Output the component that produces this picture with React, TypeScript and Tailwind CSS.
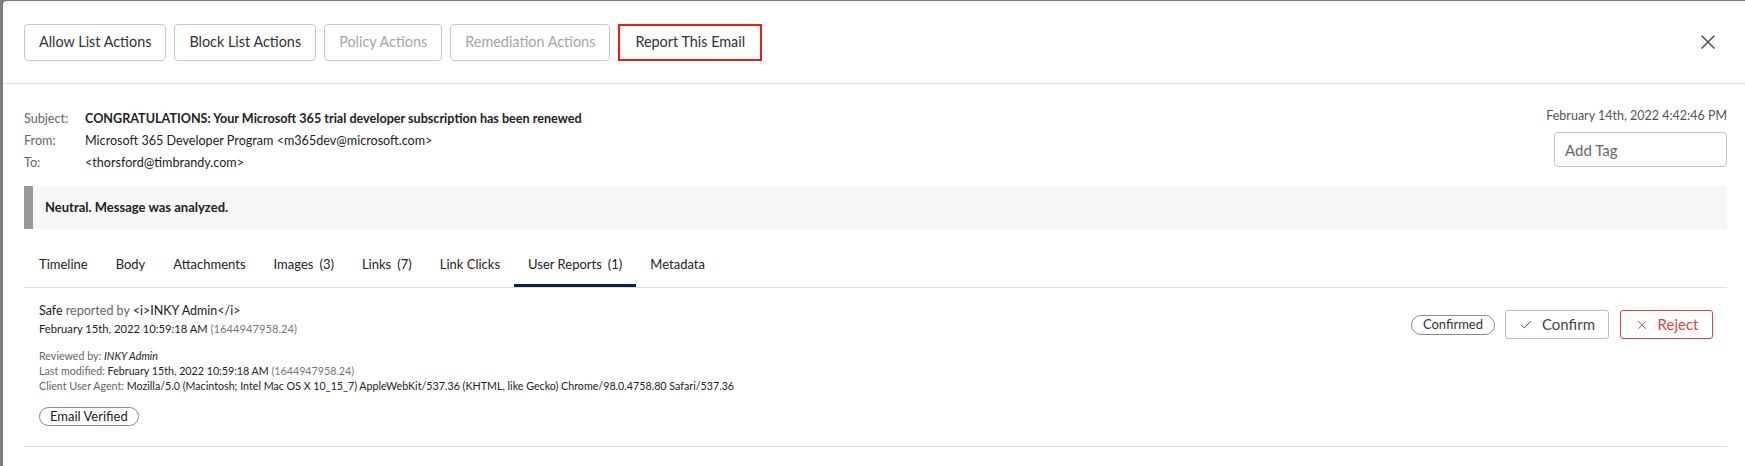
import { X, Check } from "lucide-react";

const ACTIONS = [
  { label: "Allow List Actions", disabled: false },
  { label: "Block List Actions", disabled: false },
  { label: "Policy Actions", disabled: true },
  { label: "Remediation Actions", disabled: true },
];

const TABS = [
  { label: "Timeline" },
  { label: "Body" },
  { label: "Attachments" },
  { label: "Images", count: 3 },
  { label: "Links", count: 7 },
  { label: "Link Clicks" },
  { label: "User Reports", count: 1, active: true },
  { label: "Metadata" },
];

export default function App() {
  return (
    <div className="h-[466px] w-full overflow-hidden bg-[#7c7c7c] pl-[3px] pt-[1px] font-['Lato',sans-serif] text-[#222]">
      <div className="h-full rounded-tl-[4px] bg-white">
        {/* action bar */}
        <div className="flex h-[83px] items-center border-b border-[#dddddd] pl-[21px] pr-[25px]">
          <div className="flex items-center gap-2">
            {ACTIONS.map((a) => (
              <button
                key={a.label}
                className={`h-[37px] rounded-[4px] border border-[#c6c6c6] px-[14px] text-[14.4px] ${
                  a.disabled ? "text-[#a5a5a5]" : "text-[#333]"
                }`}
              >
                {a.label}
              </button>
            ))}
            <button className="h-[37px] border-2 border-[#ee1c0e] px-[15px] text-[14.4px] text-[#333]">
              Report This Email
            </button>
          </div>
          <button className="ml-auto text-[#555]">
            <X size={24} strokeWidth={1.6} />
          </button>
        </div>

        <div className="pl-[21px] pr-[18px]">
          {/* message header */}
          <div className="flex justify-between pt-[24px]">
            <div className="grid grid-cols-[61px_1fr] text-[12.6px] leading-[22px]">
              <span className="text-[#666]">Subject:</span>
              <span className="font-bold">CONGRATULATIONS: Your Microsoft 365 trial developer subscription has been renewed</span>
              <span className="text-[#666]">From:</span>
              <span>Microsoft 365 Developer Program &lt;m365dev@microsoft.com&gt;</span>
              <span className="text-[#666]">To:</span>
              <span>&lt;thorsford@timbrandy.com&gt;</span>
            </div>
            <div className="-mt-[2px] flex flex-col items-end">
              <div className="text-[12.5px] leading-[20px] text-[#555]">February 14th, 2022 4:42:46 PM</div>
              <input
                placeholder="Add Tag"
                className="mt-[6px] h-[35px] w-[173px] rounded-[4px] border border-[#c4c4c4] px-[10px] text-[15px] placeholder:text-[#666]"
              />
            </div>
          </div>

          {/* verdict */}
          <div className="mt-[12px] flex h-[43px] items-center border-l-[9px] border-[#999] bg-[#f7f7f7] pl-[12px] text-[13px] font-bold">
            Neutral. Message was analyzed.
          </div>

          {/* tabs */}
          <div className="mt-[17px] flex border-b border-[#dddddd] pl-px">
            {TABS.map((t) => (
              <div
                key={t.label}
                className={`border-b-[3px] px-[14px] pb-[10px] pt-[8px] text-[13px] leading-[20px] ${
                  t.active ? "border-[#0f1d4f]" : "border-transparent"
                }`}
              >
                {t.label}
                {t.count !== undefined && <span className="ml-[6px]">({t.count})</span>}
              </div>
            ))}
          </div>

          {/* user report */}
          <div className="flex justify-between border-b border-[#dddddd] pb-[19px] pl-[15px] pr-[14px] pt-[14px]">
            <div>
              <div className="text-[12.5px] leading-[18px]">
                Safe <span className="text-[#666]">reported by</span> &lt;i&gt;INKY Admin&lt;/i&gt;
              </div>
              <div className="text-[11.2px] leading-[18px]">
                February 15th, 2022 10:59:18 AM <span className="text-[#777]">(1644947958.24)</span>
              </div>
              <div className="mt-[10px] text-[10.7px] leading-[15px]">
                <div>
                  <span className="text-[#666]">Reviewed by: </span>
                  <i>INKY Admin</i>
                </div>
                <div>
                  <span className="text-[#666]">Last modified: </span>
                  February 15th, 2022 10:59:18 AM <span className="text-[#777]">(1644947958.24)</span>
                </div>
                <div>
                  <span className="text-[#666]">Client User Agent: </span>
                  Mozilla/5.0 (Macintosh; Intel Mac OS X 10_15_7) AppleWebKit/537.36 (KHTML, like Gecko) Chrome/98.0.4758.80 Safari/537.36
                </div>
              </div>
              <div className="mt-[14px] inline-flex h-[19px] items-center rounded-full border border-[#8a8a8a] px-[10px] text-[13px]">
                Email Verified
              </div>
            </div>
            <div className="mt-[8px] flex h-[29px] items-center">
              <span className="flex h-[20px] items-center rounded-full border border-[#8a8a8a] px-[11px] text-[13px] text-[#333]">
                Confirmed
              </span>
              <button className="ml-[10px] flex h-[29px] w-[104px] items-center justify-center gap-[9px] rounded-[3px] border border-[#bdbdbd] text-[15px] text-[#444]">
                <Check size={14} strokeWidth={1.6} />
                Confirm
              </button>
              <button className="ml-[11px] flex h-[29px] w-[93px] items-center justify-center gap-[9px] rounded-[3px] border border-[#e8413c] text-[15px] text-[#e8413c]">
                <X size={14} strokeWidth={1.6} />
                Reject
              </button>
            </div>
          </div>
        </div>
      </div>
    </div>
  );
}
